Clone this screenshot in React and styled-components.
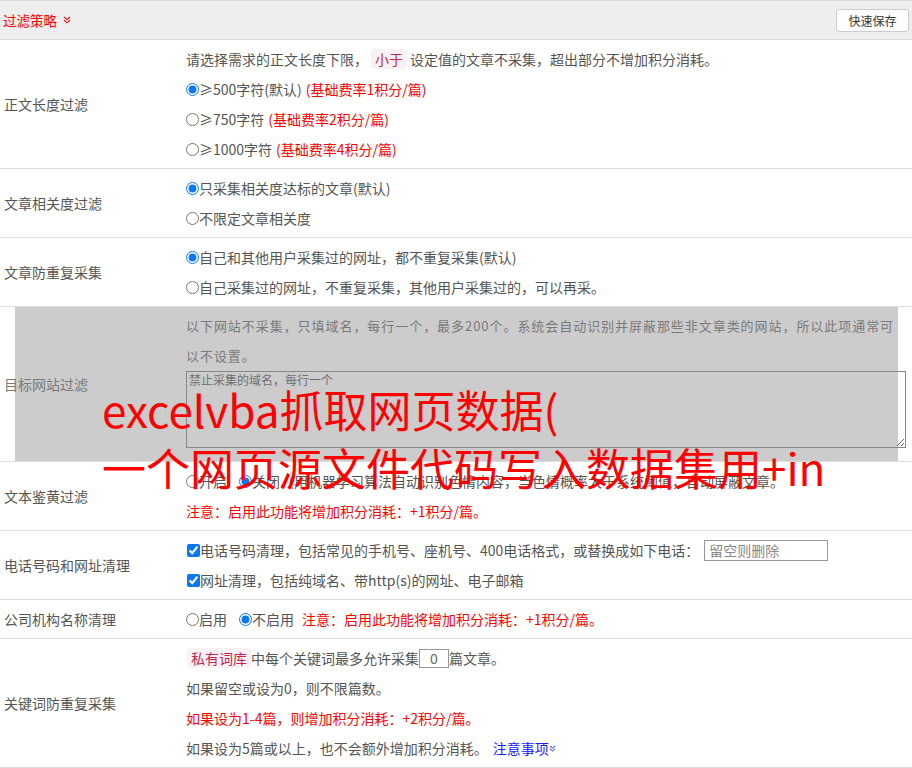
import React from "react";
import styled, { createGlobalStyle } from "styled-components";

const Global = createGlobalStyle`
  html, body { margin: 0; padding: 0; background: #fff; overflow: hidden; }
  body { font-family: "Noto Sans CJK SC", "Noto Sans", sans-serif; }
  * { box-sizing: border-box; }
`;

const Page = styled.div`
  position: relative;
  width: 912px;
  font-size: 14px;
  color: #555;
`;

const Header = styled.div`
  height: 40px;
  display: flex;
  align-items: center;
  justify-content: space-between;
  background: #eee;
  border-top: 1px solid #ddd;
  border-bottom: 1px solid #ddd;
  padding: 0 3px 0 3px;
`;

const Title = styled.div`
  color: #f00;
  font-size: 13.5px;
  display: flex;
  align-items: center;
  gap: 6px;
`;

const SaveButton = styled.button`
  width: 73px;
  height: 23px;
  padding: 0;
  background: #fff;
  border: 1px solid #ccc;
  border-radius: 3px;
  font-family: inherit;
  font-size: 12px;
  color: #333;
  line-height: 21px;
`;

const Row = styled.div`
  display: grid;
  grid-template-columns: 186px 1fr;
  align-items: center;
  border-bottom: 1px solid #ddd;
  ${(p) =>
    p.$shaded &&
    `background: linear-gradient(#ccc, #ccc) 15px 0 / 883px 100% no-repeat; color: #7a7a7a;`}
`;

const Label = styled.div`
  padding-left: 4px;
  white-space: nowrap;
`;

const Content = styled.div`
  padding: 4px 0;
`;

const Line = styled.div`
  height: 30px;
  line-height: 30px;
  white-space: nowrap;
  display: flex;
  align-items: center;
  color: ${(p) => (p.$red ? "#f00" : "inherit")};
  ${(p) => p.$small && `font-size: 13px; letter-spacing: 0.95px;`}
`;

const Red = styled.span`
  color: #f00;
  margin-left: ${(p) => p.$gap || 0}px;
`;

const Code = styled.span`
  background: #f9f2f4;
  color: #c7254e;
  border-radius: 4px;
  padding: 0 4px;
  line-height: 20px;
  margin: 0 ${(p) => p.$mr ?? 3}px 0 ${(p) => p.$ml ?? 3}px;
`;

const Radio = styled.input.attrs({ type: "radio" })`
  margin: 0;
  width: 13px;
  height: 13px;
  accent-color: #0a78f0;
  margin-left: ${(p) => p.$ml || 0}px;
`;

const Check = styled.input.attrs({ type: "checkbox" })`
  margin: 0 0 0 1px;
  width: 13px;
  height: 13px;
  accent-color: #0a78f0;
`;

const TextArea = styled.textarea`
  display: block;
  width: 720px;
  height: 77px;
  margin: 0 0 9px 0;
  border: 1px solid #888;
  background: transparent;
  font-family: inherit;
  font-size: 12px;
  padding: 0 2px;
  line-height: 16px;
  &::placeholder { color: #6f6f6f; }
`;

const TextInput = styled.input`
  width: ${(p) => p.$w}px;
  height: ${(p) => p.$h}px;
  border: 1px solid #999;
  font-family: inherit;
  font-size: 14px;
  color: #666;
  padding: 0 ${(p) => p.$pad ?? 4}px;
  margin: 0 ${(p) => p.$mr || 0}px 0 ${(p) => p.$ml || 0}px;
  text-align: ${(p) => p.$align || "left"};
  &::placeholder { color: #888; }
`;

const Link = styled.a`
  color: #1a1aff;
  margin-left: 5px;
  display: inline-flex;
  align-items: center;
  text-decoration: none;
`;

const Watermark = styled.div`
  position: absolute;
  left: 102px;
  top: 380px;
  color: #f00;
  font-size: 44px;
  line-height: 58px;
  white-space: nowrap;
  pointer-events: none;
`;

const Chevrons = ({ color, size = 8 }) => (
  <svg width={size} height={size} viewBox="0 0 8 8" fill="none" stroke={color} strokeWidth="1.1">
    <path d="M1 1 L4 3.6 L7 1" />
    <path d="M1 4.2 L4 6.8 L7 4.2" />
  </svg>
);

export default function App() {
  return (
    <>
      <Global />
      <Page>
        <Header>
          <Title>
            过滤策略
            <Chevrons color="#f00" />
          </Title>
          <SaveButton>快速保存</SaveButton>
        </Header>

        <Row>
          <Label>正文长度过滤</Label>
          <Content>
            <Line>
              请选择需求的正文长度下限，<Code>小于</Code>设定值的文章不采集，超出部分不增加积分消耗。
            </Line>
            <Line>
              <Radio name="len" defaultChecked />≥500字符(默认)<Red $gap={4}>(基础费率1积分/篇)</Red>
            </Line>
            <Line>
              <Radio name="len" />≥750字符<Red $gap={4}>(基础费率2积分/篇)</Red>
            </Line>
            <Line>
              <Radio name="len" />≥1000字符<Red $gap={4}>(基础费率4积分/篇)</Red>
            </Line>
          </Content>
        </Row>

        <Row>
          <Label>文章相关度过滤</Label>
          <Content>
            <Line>
              <Radio name="rel" defaultChecked />只采集相关度达标的文章(默认)
            </Line>
            <Line>
              <Radio name="rel" />不限定文章相关度
            </Line>
          </Content>
        </Row>

        <Row>
          <Label>文章防重复采集</Label>
          <Content>
            <Line>
              <Radio name="dup" defaultChecked />自己和其他用户采集过的网址，都不重复采集(默认)
            </Line>
            <Line>
              <Radio name="dup" />自己采集过的网址，不重复采集，其他用户采集过的，可以再采。
            </Line>
          </Content>
        </Row>

        <Row $shaded>
          <Label>目标网站过滤</Label>
          <Content>
            <Line $small>以下网站不采集，只填域名，每行一个，最多200个。系统会自动识别并屏蔽那些非文章类的网站，所以此项通常可</Line>
            <Line $small>以不设置。</Line>
            <TextArea placeholder="禁止采集的域名，每行一个" />
          </Content>
        </Row>

        <Row>
          <Label>文本鉴黄过滤</Label>
          <Content>
            <Line>
              <Radio name="porn" />开启<Radio name="porn" $ml={12} defaultChecked />关闭（用机器学习算法自动识别色情内容，当色情概率大于系统阈值，自动屏蔽文章。
            </Line>
            <Line $red>注意：启用此功能将增加积分消耗：+1积分/篇。</Line>
          </Content>
        </Row>

        <Row>
          <Label>电话号码和网址清理</Label>
          <Content>
            <Line>
              <Check defaultChecked />电话号码清理，包括常见的手机号、座机号、400电话格式，或替换成如下电话：
              <TextInput $w={124} $h={21} $ml={5} placeholder="留空则删除" />
            </Line>
            <Line>
              <Check defaultChecked />网址清理，包括纯域名、带http(s)的网址、电子邮箱
            </Line>
          </Content>
        </Row>

        <Row>
          <Label>公司机构名称清理</Label>
          <Content>
            <Line>
              <Radio name="org" />启用<Radio name="org" $ml={12} defaultChecked />不启用
              <Red $gap={8}>注意：启用此功能将增加积分消耗：+1积分/篇。</Red>
            </Line>
          </Content>
        </Row>

        <Row>
          <Label>关键词防重复采集</Label>
          <Content>
            <Line>
              <Code $ml={1} $mr={0}>私有词库</Code>中每个关键词最多允许采集
              <TextInput $w={30} $h={19} $pad={0} $align="center" defaultValue="0" />
              篇文章。
            </Line>
            <Line>如果留空或设为0，则不限篇数。</Line>
            <Line $red>如果设为1-4篇，则增加积分消耗：+2积分/篇。</Line>
            <Line>
              如果设为5篇或以上，也不会额外增加积分消耗。
              <Link href="#">
                注意事项
                <Chevrons color="#1a1aff" size={7} />
              </Link>
            </Line>
          </Content>
        </Row>

        <Watermark>
          excelvba抓取网页数据(
          <br />
          一个网页源文件代码写入数据集用+in
        </Watermark>
      </Page>
    </>
  );
}
